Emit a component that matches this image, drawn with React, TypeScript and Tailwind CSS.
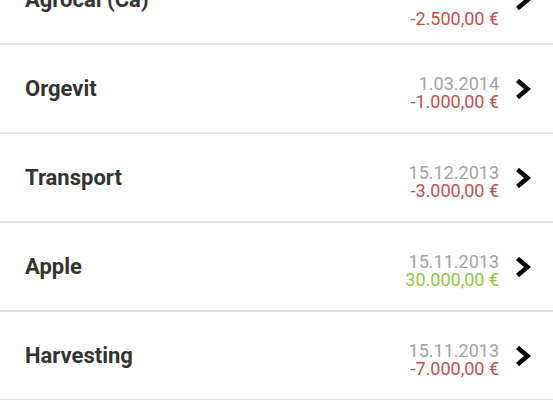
type Entry = {
  name: string;
  date: string;
  amount: string;
  positive?: boolean;
};

const entries: Entry[] = [
  { name: "Agrocal (Ca)", date: "", amount: "-2.500,00 €" },
  { name: "Orgevit", date: "1.03.2014", amount: "-1.000,00 €" },
  { name: "Transport", date: "15.12.2013", amount: "-3.000,00 €" },
  { name: "Apple", date: "15.11.2013", amount: "30.000,00 €", positive: true },
  { name: "Harvesting", date: "15.11.2013", amount: "-7.000,00 €" },
];

function Chevron() {
  return (
    <svg width="16" height="20" viewBox="0 0 16 20" className="shrink-0">
      <polyline
        points="2.5,1.5 12.5,10 2.5,18.5"
        fill="none"
        stroke="#000"
        strokeWidth="4.5"
        strokeLinejoin="miter"
      />
    </svg>
  );
}

function Row({ entry, first }: { entry: Entry; first?: boolean }) {
  return (
    <div
      className={`flex h-[89px] items-center border-b-2 border-[#e2e2e2] pl-[25px] pr-[22px] ${
        first ? "-mt-[44px]" : ""
      }`}
    >
      <div className="flex-1 text-[22px] font-bold leading-none text-[#333333]">
        {entry.name}
      </div>
      <div
        className={`flex flex-col items-end gap-[1px] text-[18px] leading-[17px] ${
          first ? "mt-[37px]" : "mt-[7px]"
        }`}
      >
        {entry.date && <span className="text-[#a3a3a3]">{entry.date}</span>}
        <span className={entry.positive ? "text-[#8dc63f]" : "text-[#c4504e]"}>
          {entry.amount}
        </span>
      </div>
      <div className="ml-[16px]">
        <Chevron />
      </div>
    </div>
  );
}

export default function App() {
  return (
    <div
      className="h-[400px] w-[553px] overflow-hidden bg-white"
      style={{ fontFamily: "Roboto, 'Liberation Sans', sans-serif" }}
    >
      {entries.map((e, i) => (
        <Row key={e.name} entry={e} first={i === 0} />
      ))}
    </div>
  );
}
